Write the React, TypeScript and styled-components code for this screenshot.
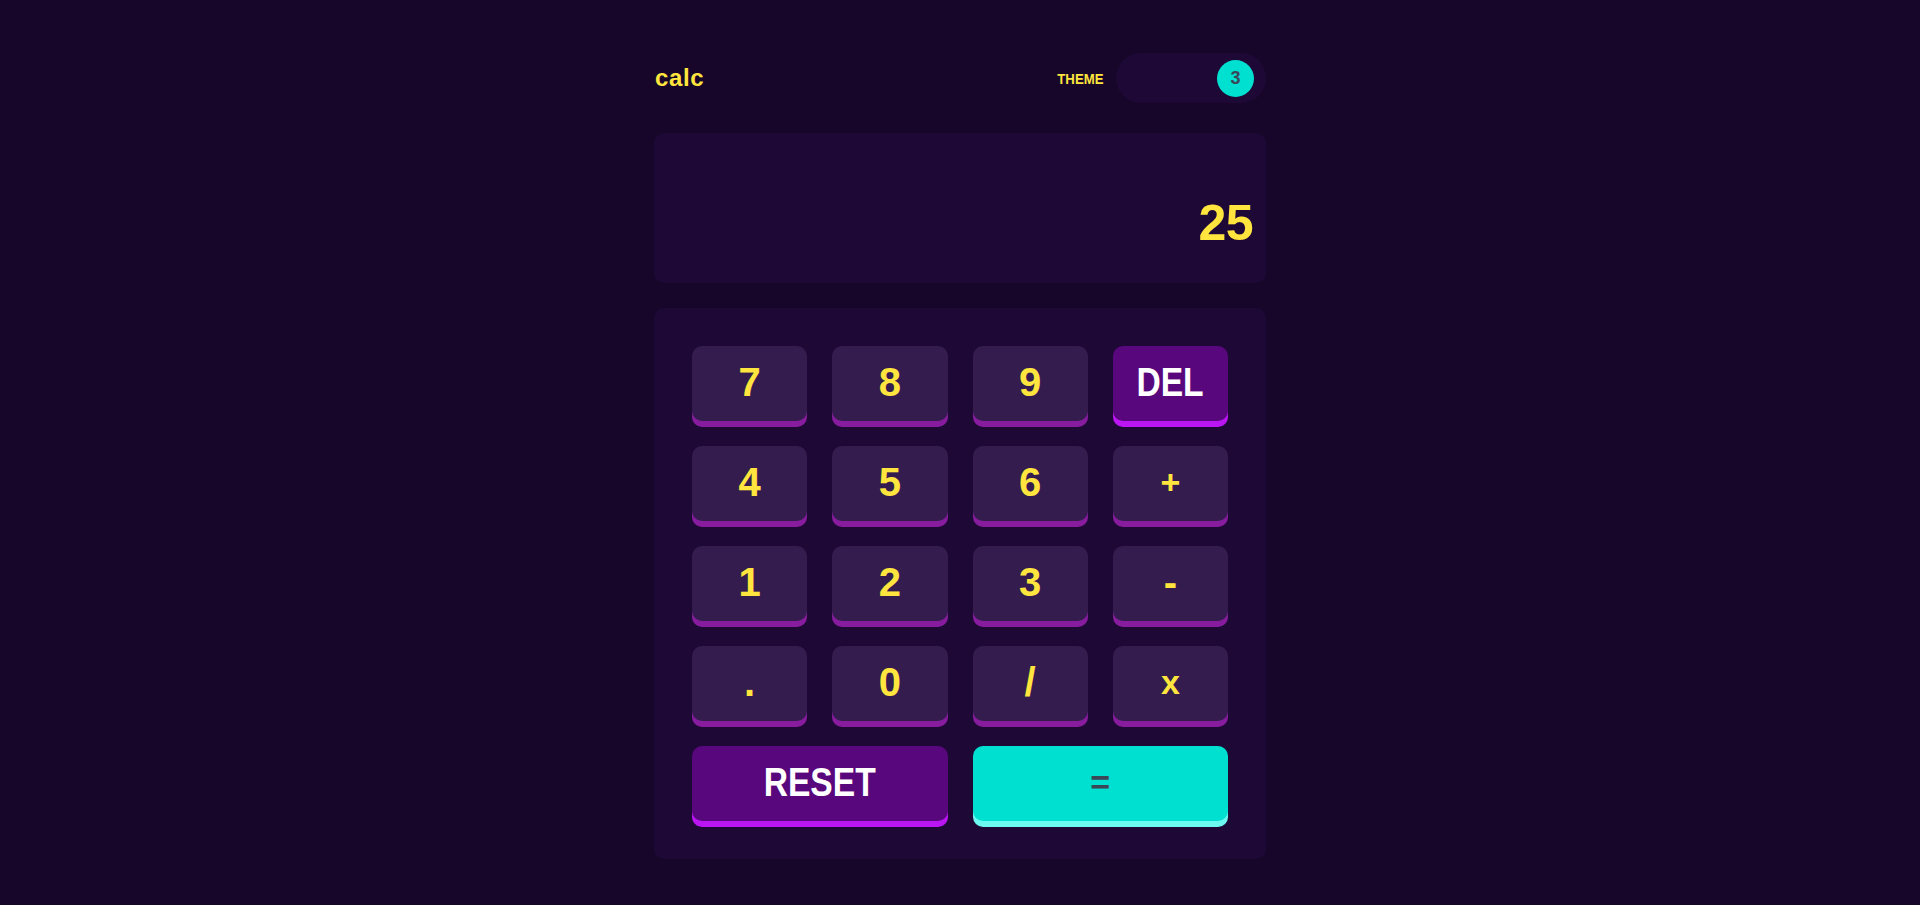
import React from "react";
import styled, { createGlobalStyle } from "styled-components";

const GlobalStyle = createGlobalStyle`
  html, body {
    margin: 0;
    padding: 0;
    background: #17062a;
  }
  body {
    font-family: "Liberation Sans", Arial, sans-serif;
    min-height: 905px;
  }
  * { box-sizing: border-box; }
`;

const Page = styled.main`
  display: flex;
  justify-content: center;
  padding-top: 53px;
  min-height: 905px;
  background: #17062a;
`;

const Calculator = styled.div`
  width: 612px;
  display: flex;
  flex-direction: column;
`;

const Header = styled.header`
  height: 50px;
  display: flex;
  align-items: center;
  justify-content: space-between;
`;

const Logo = styled.h1`
  margin: 0;
  padding-left: 1px;
  font-family: "Liberation Sans", Arial, sans-serif;
  font-weight: 700;
  font-size: 24px;
  letter-spacing: 0.6px;
  color: #ffe53d;
`;

const ThemeBox = styled.div`
  display: flex;
  align-items: center;
  gap: 13px;
`;

const ThemeLabel = styled.span`
  display: inline-block;
  font-family: "Liberation Sans", Arial, sans-serif;
  font-weight: 700;
  font-size: 15px;
  color: #ffe53d;
  transform: scaleX(0.88);
  transform-origin: right center;
`;

const Toggle = styled.div`
  width: 150px;
  height: 50px;
  border-radius: 25px;
  background: #1e0936;
  display: flex;
  align-items: center;
  justify-content: flex-end;
  padding-right: 12px;
`;

const Knob = styled.span`
  width: 37px;
  height: 37px;
  border-radius: 50%;
  background: #00e0d1;
  color: #3a4757;
  font-weight: 700;
  font-size: 18px;
  display: flex;
  align-items: center;
  justify-content: center;
`;

const Screen = styled.section`
  margin-top: 30px;
  height: 150px;
  border-radius: 10px;
  background: #1e0936;
  display: flex;
  align-items: flex-end;
  justify-content: flex-end;
  padding: 0 13px 31px;
`;

const Output = styled.span`
  font-family: "Liberation Sans", Arial, sans-serif;
  font-weight: 700;
  font-size: 50px;
  color: #ffe53d;
  letter-spacing: -0.5px;
`;

const Keypad = styled.section`
  margin-top: 25px;
  padding: 38px;
  border-radius: 10px;
  background: #1e0936;
  display: grid;
  grid-template-columns: repeat(4, 1fr);
  grid-auto-rows: 75px;
  gap: 25px;
`;

type Variant = "num" | "accent" | "equals";
type Size = "digit" | "word" | "op";

const palette: Record<Variant, { bg: string; shadow: string; color: string }> = {
  num: { bg: "#341c4f", shadow: "#881c9e", color: "#ffe53d" },
  accent: { bg: "#58077d", shadow: "#bc15f4", color: "#ffffff" },
  equals: { bg: "#00e0d1", shadow: "#6cf9f2", color: "#3a4757" },
};

const sizes: Record<Size, string> = {
  digit: "40px",
  word: "40px",
  op: "34px",
};

const Key = styled.button<{ $variant: Variant; $wide?: boolean; $size: Size }>`
  grid-column: ${(p) => (p.$wide ? "span 2" : "span 1")};
  border: none;
  border-radius: 10px;
  cursor: pointer;
  background: ${(p) => palette[p.$variant].bg};
  color: ${(p) => palette[p.$variant].color};
  box-shadow: 0 6px 0 ${(p) => palette[p.$variant].shadow};
  font-family: "Liberation Sans", Arial, sans-serif;
  font-weight: 700;
  font-size: ${(p) => sizes[p.$size]};
  display: flex;
  align-items: center;
  justify-content: center;
  padding: 0 0 4px;
  line-height: 1;
`;

const Word = styled.span`
  display: inline-block;
  transform: scaleX(0.84);
`;

type KeyDef = { label: string; variant: Variant; wide?: boolean; size: Size };

const keys: KeyDef[] = [
  { label: "7", variant: "num", size: "digit" },
  { label: "8", variant: "num", size: "digit" },
  { label: "9", variant: "num", size: "digit" },
  { label: "DEL", variant: "accent", size: "word" },
  { label: "4", variant: "num", size: "digit" },
  { label: "5", variant: "num", size: "digit" },
  { label: "6", variant: "num", size: "digit" },
  { label: "+", variant: "num", size: "op" },
  { label: "1", variant: "num", size: "digit" },
  { label: "2", variant: "num", size: "digit" },
  { label: "3", variant: "num", size: "digit" },
  { label: "-", variant: "num", size: "digit" },
  { label: ".", variant: "num", size: "digit" },
  { label: "0", variant: "num", size: "digit" },
  { label: "/", variant: "num", size: "digit" },
  { label: "x", variant: "num", size: "op" },
  { label: "RESET", variant: "accent", wide: true, size: "word" },
  { label: "=", variant: "equals", wide: true, size: "op" },
];

export default function App() {
  return (
    <>
      <GlobalStyle />
      <Page>
        <Calculator>
          <Header>
            <Logo>calc</Logo>
            <ThemeBox>
              <ThemeLabel>THEME</ThemeLabel>
              <Toggle>
                <Knob>3</Knob>
              </Toggle>
            </ThemeBox>
          </Header>
          <Screen>
            <Output>25</Output>
          </Screen>
          <Keypad>
            {keys.map((k) => (
              <Key key={k.label} $variant={k.variant} $wide={k.wide} $size={k.size}>
                {k.size === "word" ? <Word>{k.label}</Word> : k.label}
              </Key>
            ))}
          </Keypad>
        </Calculator>
      </Page>
    </>
  );
}
